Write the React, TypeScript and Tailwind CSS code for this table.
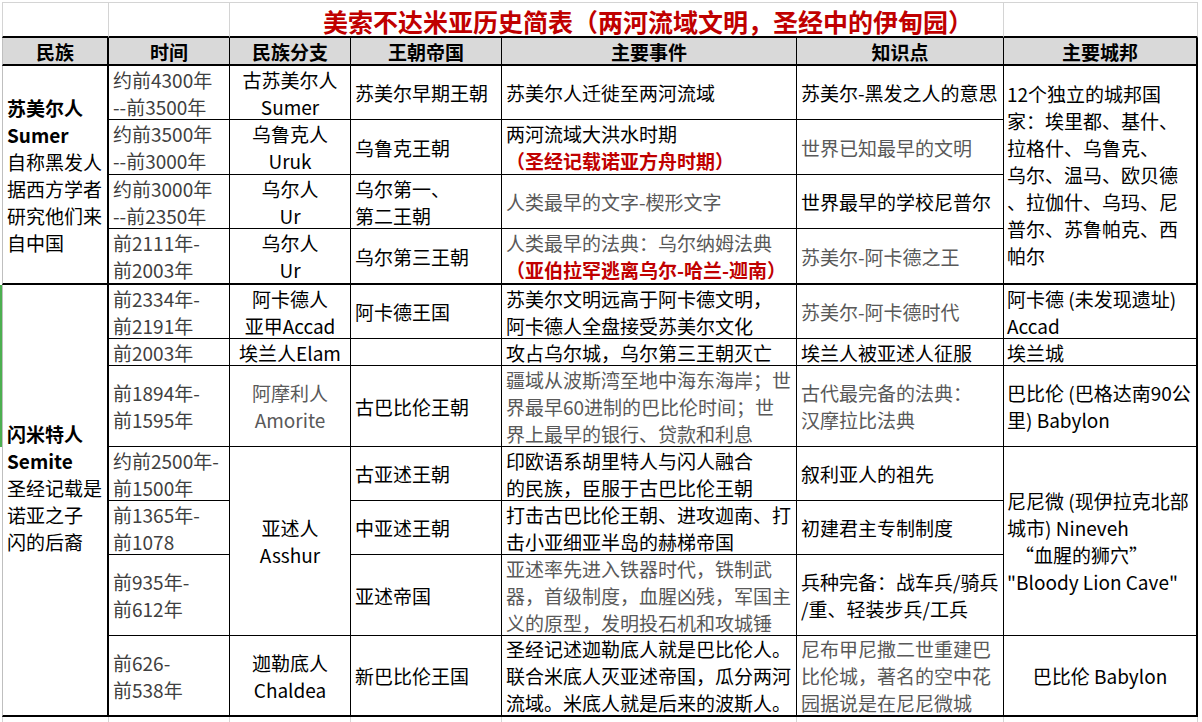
import React from 'react'

type Tone = 'black' | 'gray' | 'dim'

interface CellProps {
  lines?: React.ReactNode[]
  className?: string
  center?: boolean
  tone?: Tone
}

const toneClass: Record<Tone, string> = {
  black: 'text-black',
  gray: 'text-[#595959]',
  dim: 'text-[#404040]',
}

// one spreadsheet cell, lines are laid out exactly as they wrap in the sheet
function Cell({ lines = [], className = '', center = false, tone = 'black' }: CellProps) {
  return (
    <div
      className={`flex flex-col justify-center overflow-hidden whitespace-nowrap border-black leading-[27px] ${
        center ? 'items-center text-center' : 'items-start pl-1'
      } ${toneClass[tone]} ${className}`}
    >
      {lines.map((l, i) => (
        <div key={i}>{l}</div>
      ))}
    </div>
  )
}

const Red = ({ children }: { children: React.ReactNode }) => (
  <span className="font-bold text-[#c00000]">{children}</span>
)

const headers = ['民族', '时间', '民族分支', '王朝帝国', '主要事件', '知识点', '主要城邦']

export default function App() {
  const thin = 'border-r border-b'
  const thick = 'border-r border-b-2'

  return (
    <div
      className="relative h-[722px] w-[1202px] overflow-hidden bg-white text-[19px]"
      style={{ fontFamily: '"Noto Sans CJK SC", "Noto Sans", sans-serif' }}
    >
      <div className="ml-[2px] mt-[2px] grid grid-cols-[107px_121px_121px_151px_295px_207px_194px] grid-rows-[36px_28px_54px_55px_54px_56px_54px_27px_81px_54px_54px_81px_81px_6px]">
        {/* title row */}
        <div className="border-l border-r border-t border-b-2 border-l-[#d4d4d4] border-r-[#d4d4d4] border-t-[#d4d4d4] border-b-black" />
        <div className="border-r border-t border-b-2 border-r-[#d4d4d4] border-t-[#d4d4d4] border-b-black" />
        <div className="col-span-4 flex items-center border-r border-t border-b-2 border-r-[#d4d4d4] border-t-[#d4d4d4] border-b-black pl-[93px] pt-[3px] text-[25px] font-bold leading-none text-[#c00000]">
          美索不达米亚历史简表（两河流域文明，圣经中的伊甸园）
        </div>
        <div className="border-r border-t border-b-2 border-r-[#d4d4d4] border-t-[#d4d4d4] border-b-black" />

        {/* header row */}
        {headers.map((h, i) => (
          <div
            key={h}
            className={`flex items-center justify-center border-b-2 border-black bg-[#d9d9d9] font-bold leading-none ${
              i === 0 ? 'border-l border-r-2 border-l-[#bfbfbf]' : i === 6 ? 'border-r-2' : 'border-r'
            }`}
          >
            {h}
          </div>
        ))}

        {/* 苏美尔人 */}
        <Cell
          className="row-span-4 border-l border-r-2 border-b-2 border-l-[#bfbfbf]"
          lines={[
            <b>苏美尔人</b>,
            <b>Sumer</b>,
            '自称黑发人',
            '据西方学者',
            '研究他们来',
            '自中国',
          ]}
        />
        <Cell className={thin} tone="dim" lines={['约前4300年', '--前3500年']} />
        <Cell className={thin} center lines={['古苏美尔人', 'Sumer']} />
        <Cell className={thin} lines={['苏美尔早期王朝']} />
        <Cell className={thin} lines={['苏美尔人迁徙至两河流域']} />
        <Cell className={thin} lines={['苏美尔-黑发之人的意思']} />
        <Cell
          className="row-span-4 border-r-2 border-b-2 pl-[3px]"
          lines={[
            '12个独立的城邦国',
            '家：埃里都、基什、',
            '拉格什、乌鲁克、',
            '乌尔、温马、欧贝德',
            '、拉伽什、乌玛、尼',
            '普尔、苏鲁帕克、西',
            '帕尔',
          ]}
        />

        <Cell className={thin} tone="dim" lines={['约前3500年', '--前3000年']} />
        <Cell className={thin} center lines={['乌鲁克人', 'Uruk']} />
        <Cell className={thin} lines={['乌鲁克王朝']} />
        <Cell className={thin} lines={['两河流域大洪水时期', <Red>（圣经记载诺亚方舟时期）</Red>]} />
        <Cell className={thin} tone="gray" lines={['世界已知最早的文明']} />

        <Cell className={thin} tone="dim" lines={['约前3000年', '--前2350年']} />
        <Cell className={thin} center lines={['乌尔人', 'Ur']} />
        <Cell className={thin} lines={['乌尔第一、', '第二王朝']} />
        <Cell className={thin} tone="gray" lines={['人类最早的文字-楔形文字']} />
        <Cell className={thin} lines={['世界最早的学校尼普尔']} />

        <Cell className={thick} tone="dim" lines={['前2111年-', '前2003年']} />
        <Cell className={thick} center lines={['乌尔人', 'Ur']} />
        <Cell className={thick} lines={['乌尔第三王朝']} />
        <Cell
          className={thick}
          tone="gray"
          lines={['人类最早的法典：乌尔纳姆法典', <Red>（亚伯拉罕逃离乌尔-哈兰-迦南）</Red>]}
        />
        <Cell className={thick} tone="gray" lines={['苏美尔-阿卡德之王']} />

        {/* 闪米特人 */}
        <div className="relative row-span-7 flex flex-col justify-center border-l border-r-2 border-b-2 border-black border-l-[#bfbfbf] pb-[26px] pl-1 leading-[27px] whitespace-nowrap">
          <span className="absolute left-0 top-0 h-0 w-0 border-l-[5px] border-t-[5px] border-l-transparent border-t-[#1e8c3a]" style={{ borderLeftColor: '#1e8c3a', borderTopColor: '#1e8c3a', borderRightColor: 'transparent', borderBottomColor: 'transparent', borderRightWidth: 5, borderBottomWidth: 5, borderLeftWidth: 0, borderTopWidth: 0 }} />
          <div className="font-bold">闪米特人</div>
          <div className="font-bold">Semite</div>
          <div>圣经记载是</div>
          <div>诺亚之子</div>
          <div>闪的后裔</div>
        </div>
        <Cell className={thin} tone="dim" lines={['前2334年-', '前2191年']} />
        <Cell className={thin} center lines={['阿卡德人', '亚甲Accad']} />
        <Cell className={thin} lines={['阿卡德王国']} />
        <Cell className={thin} lines={['苏美尔文明远高于阿卡德文明，', '阿卡德人全盘接受苏美尔文化']} />
        <Cell className={thin} tone="gray" lines={['苏美尔-阿卡德时代']} />
        <Cell className="border-r-2 border-b pl-[3px]" lines={['阿卡德 (未发现遗址)', 'Accad']} />

        <Cell className={thin} tone="dim" lines={['前2003年']} />
        <Cell className={thin} center lines={['埃兰人Elam']} />
        <Cell className={thin} />
        <Cell className={thin} lines={['攻占乌尔城，乌尔第三王朝灭亡']} />
        <Cell className={thin} lines={['埃兰人被亚述人征服']} />
        <Cell className="border-r-2 border-b pl-[3px]" lines={['埃兰城']} />

        <Cell className={thin} tone="dim" lines={['前1894年-', '前1595年']} />
        <Cell className={thin} center tone="gray" lines={['阿摩利人', 'Amorite']} />
        <Cell className={thin} lines={['古巴比伦王朝']} />
        <Cell
          className={thin}
          tone="gray"
          lines={['疆域从波斯湾至地中海东海岸；世', '界最早60进制的巴比伦时间；世', '界上最早的银行、贷款和利息']}
        />
        <Cell className={thin} tone="gray" lines={['古代最完备的法典：', '汉摩拉比法典']} />
        <Cell className="border-r-2 border-b pl-[3px]" lines={['巴比伦 (巴格达南90公', '里) Babylon']} />

        <Cell className={thin} tone="dim" lines={['约前2500年-', '前1500年']} />
        <Cell className={`row-span-3 ${thin}`} center lines={['亚述人', 'Asshur']} />
        <Cell className={thin} lines={['古亚述王朝']} />
        <Cell className={thin} lines={['印欧语系胡里特人与闪人融合', '的民族，臣服于古巴比伦王朝']} />
        <Cell className={thin} lines={['叙利亚人的祖先']} />
        <Cell
          className="row-span-3 border-r-2 border-b pl-[3px]"
          lines={[
            '尼尼微 (现伊拉克北部',
            '城市) Nineveh',
            <span className="pl-[8px]">“血腥的狮穴”</span>,
            '"Bloody Lion Cave"',
          ]}
        />

        <Cell className={thin} tone="dim" lines={['前1365年-', '前1078']} />
        <Cell className={thin} lines={['中亚述王朝']} />
        <Cell className={thin} lines={['打击古巴比伦王朝、进攻迦南、打', '击小亚细亚半岛的赫梯帝国']} />
        <Cell className={thin} lines={['初建君主专制制度']} />

        <Cell className={thin} tone="dim" lines={['前935年-', '前612年']} />
        <Cell className={thin} lines={['亚述帝国']} />
        <Cell
          className={thin}
          tone="gray"
          lines={['亚述率先进入铁器时代，铁制武', '器，首级制度，血腥凶残，军国主', '义的原型，发明投石机和攻城锤']}
        />
        <Cell className={thin} lines={['兵种完备：战车兵/骑兵', '/重、轻装步兵/工兵']} />

        <Cell className={thick} tone="dim" lines={['前626-', '前538年']} />
        <Cell className={thick} center lines={['迦勒底人', 'Chaldea']} />
        <Cell className={thick} lines={['新巴比伦王国']} />
        <Cell
          className={thick}
          lines={['圣经记述迦勒底人就是巴比伦人。', '联合米底人灭亚述帝国，瓜分两河', '流域。米底人就是后来的波斯人。']}
        />
        <Cell className={thick} tone="gray" lines={['尼布甲尼撒二世重建巴', '比伦城，著名的空中花', '园据说是在尼尼微城']} />
        <Cell className="border-r-2 border-b-2" center lines={['巴比伦 Babylon']} />

        {/* sheet gridlines below the table */}
        <div className="border-l border-r border-[#d4d4d4]" />
        <div className="border-r border-[#d4d4d4]" />
        <div className="border-r border-[#d4d4d4]" />
        <div className="border-r border-[#d4d4d4]" />
        <div className="border-r border-[#d4d4d4]" />
        <div className="border-r border-[#d4d4d4]" />
        <div className="border-r border-[#d4d4d4]" />
      </div>

      {/* active row marker at the sheet edge */}
      <div className="absolute left-0 top-[285px] h-[162px] w-[2px] bg-[#4caf50]" />
    </div>
  )
}
